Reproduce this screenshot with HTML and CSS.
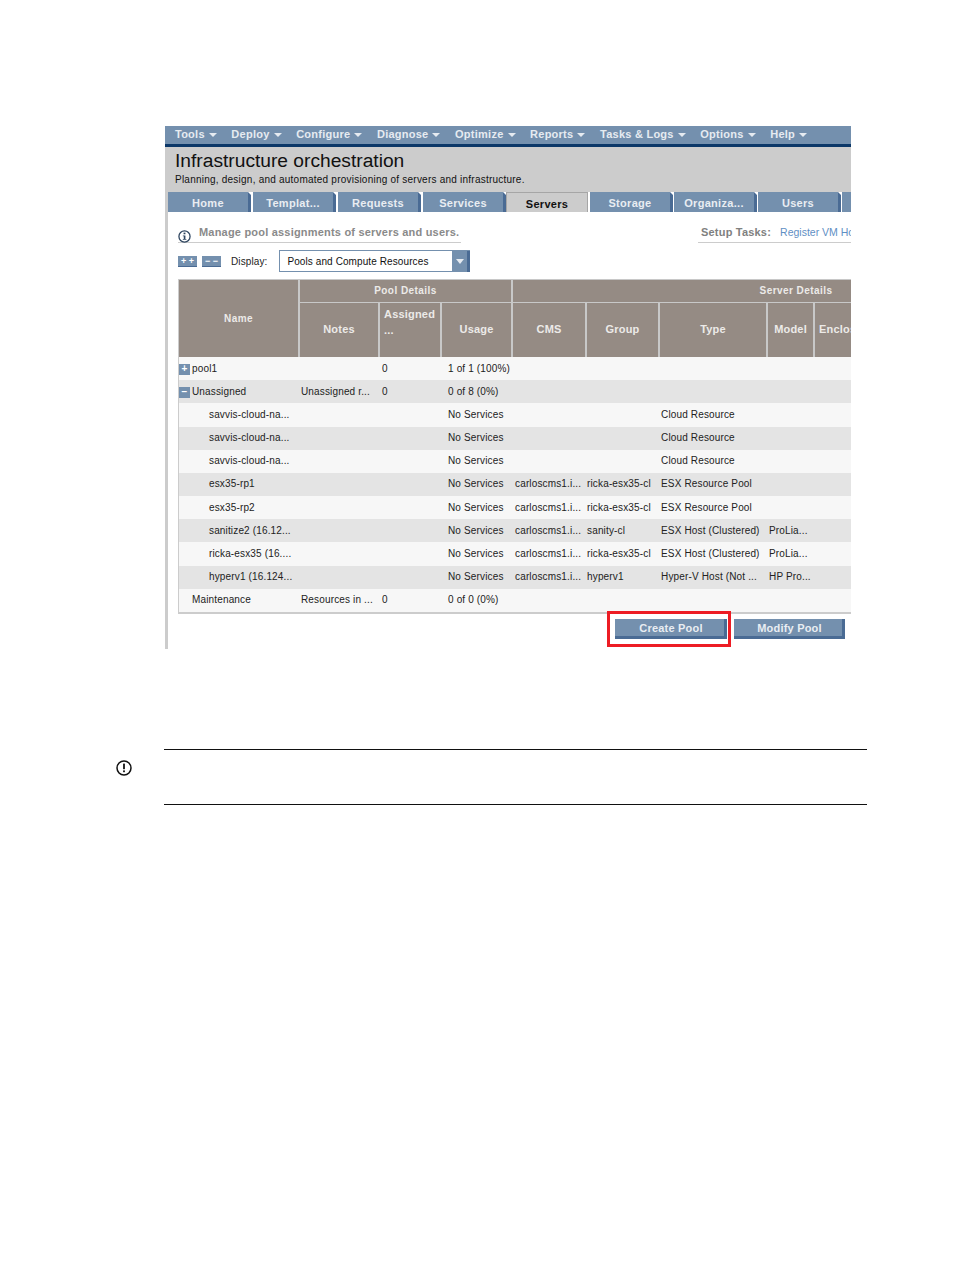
FILE: index.html
```html
<!DOCTYPE html>
<html lang="en">
<head>
<meta charset="utf-8">
<title>Infrastructure orchestration</title>
<link rel="stylesheet" href="styles.css">
</head>
<body>
<main class="page">
  <section class="shot">
    <nav class="menubar">
      <span class="menu-item">Tools<i class="caret"></i></span>
      <span class="menu-item">Deploy<i class="caret"></i></span>
      <span class="menu-item">Configure<i class="caret"></i></span>
      <span class="menu-item">Diagnose<i class="caret"></i></span>
      <span class="menu-item">Optimize<i class="caret"></i></span>
      <span class="menu-item">Reports<i class="caret"></i></span>
      <span class="menu-item">Tasks &amp; Logs<i class="caret"></i></span>
      <span class="menu-item">Options<i class="caret"></i></span>
      <span class="menu-item">Help<i class="caret"></i></span>
    </nav>
    <div class="body-frame">
      <header class="title-block">
        <h1 class="title">Infrastructure orchestration</h1>
        <p class="subtitle">Planning, design, and automated provisioning of servers and infrastructure.</p>
      </header>
      <div class="tabs">
        <span class="tab">Home</span>
        <span class="tab">Templat...</span>
        <span class="tab">Requests</span>
        <span class="tab">Services</span>
        <span class="tab tab-active">Servers</span>
        <span class="tab">Storage</span>
        <span class="tab">Organiza...</span>
        <span class="tab">Users</span>
        <span class="tab tab-stub"></span>
      </div>
      <div class="content">
        <div class="info-row">
          <div class="manage">
            <svg class="info-icon" viewBox="0 0 14 14" width="13" height="13" aria-hidden="true"><circle cx="7" cy="7" r="6" fill="#fff" stroke="#2f4660" stroke-width="1.4"/><rect x="6" y="2.8" width="2" height="1.8" fill="#2f4660"/><path d="M5.2 5.8H8v3.8h1v1H5.2v-1h1V6.8h-1z" fill="#2f4660"/></svg>
            <span class="manage-text">Manage pool assignments of servers and users.</span>
          </div>
          <div class="setup">
            <span class="setup-label">Setup Tasks:</span>
            <span class="setup-link">Register VM Hosts</span>
          </div>
        </div>
        <div class="display-row">
          <span class="mini-btn">+ +</span>
          <span class="mini-btn">&minus; &minus;</span>
          <span class="display-label">Display:</span>
          <div class="select">
            <span class="select-value">Pools and Compute Resources</span>
            <span class="select-btn"><i class="select-caret"></i></span>
          </div>
        </div>
        <table class="grid">
          <colgroup>
            <col class="c-name"><col class="c-notes"><col class="c-assigned"><col class="c-usage"><col class="c-cms"><col class="c-group"><col class="c-type"><col class="c-model"><col class="c-encl"><col class="c-rest">
          </colgroup>
          <thead>
            <tr class="head-top">
              <th rowspan="2" class="th-small">Name</th>
              <th colspan="3" class="th-small">Pool Details</th>
              <th colspan="6" class="th-small">Server Details</th>
            </tr>
            <tr class="head-sub">
              <th>Notes</th><th class="th-wrap">Assigned ...</th><th>Usage</th><th>CMS</th><th>Group</th><th>Type</th><th>Model</th><th class="th-left">Enclosure</th><th></th>
            </tr>
          </thead>
          <tbody>
            <tr class="odd"><td class="parent"><i class="tree-btn">+</i>pool1</td><td></td><td>0</td><td>1 of 1 (100%)</td><td></td><td></td><td></td><td></td><td colspan="2"></td></tr>
            <tr class="even"><td class="parent"><i class="tree-btn">&minus;</i>Unassigned</td><td>Unassigned r...</td><td>0</td><td>0 of 8 (0%)</td><td></td><td></td><td></td><td></td><td colspan="2"></td></tr>
            <tr class="odd tall nudge"><td class="child">savvis-cloud-na...</td><td></td><td></td><td>No Services</td><td></td><td></td><td>Cloud Resource</td><td></td><td colspan="2"></td></tr>
            <tr class="even nudge"><td class="child">savvis-cloud-na...</td><td></td><td></td><td>No Services</td><td></td><td></td><td>Cloud Resource</td><td></td><td colspan="2"></td></tr>
            <tr class="odd nudge"><td class="child">savvis-cloud-na...</td><td></td><td></td><td>No Services</td><td></td><td></td><td>Cloud Resource</td><td></td><td colspan="2"></td></tr>
            <tr class="even nudge"><td class="child">esx35-rp1</td><td></td><td></td><td>No Services</td><td>carloscms1.i...</td><td>ricka-esx35-cl</td><td>ESX Resource Pool</td><td></td><td colspan="2"></td></tr>
            <tr class="odd"><td class="child">esx35-rp2</td><td></td><td></td><td>No Services</td><td>carloscms1.i...</td><td>ricka-esx35-cl</td><td>ESX Resource Pool</td><td></td><td colspan="2"></td></tr>
            <tr class="even"><td class="child">sanitize2 (16.12...</td><td></td><td></td><td>No Services</td><td>carloscms1.i...</td><td>sanity-cl</td><td>ESX Host (Clustered)</td><td>ProLia...</td><td colspan="2"></td></tr>
            <tr class="odd tall nudge"><td class="child">ricka-esx35 (16....</td><td></td><td></td><td>No Services</td><td>carloscms1.i...</td><td>ricka-esx35-cl</td><td>ESX Host (Clustered)</td><td>ProLia...</td><td colspan="2"></td></tr>
            <tr class="even nudge"><td class="child">hyperv1 (16.124...</td><td></td><td></td><td>No Services</td><td>carloscms1.i...</td><td>hyperv1</td><td>Hyper-V Host (Not ...</td><td>HP Pro...</td><td colspan="2"></td></tr>
            <tr class="odd nudge"><td class="parent plain">Maintenance</td><td>Resources in ...</td><td>0</td><td>0 of 0 (0%)</td><td></td><td></td><td></td><td></td><td colspan="2"></td></tr>
          </tbody>
        </table>
        <div class="actions">
          <div class="highlight"><span class="action-btn">Create Pool</span></div>
          <span class="action-btn">Modify Pool</span>
        </div>
      </div>
    </div>
  </section>
  <aside class="note">
    <svg class="note-icon" viewBox="0 0 16 16" width="16" height="16" aria-hidden="true"><circle cx="8" cy="8" r="7" fill="none" stroke="#111" stroke-width="1.5"/><rect x="7.1" y="3.6" width="1.8" height="5.6" fill="#111"/><rect x="7.1" y="10.4" width="1.8" height="1.8" fill="#111"/></svg>
    <div class="note-body"></div>
  </aside>
</main>
</body>
</html>
```
FILE: styles.css
```css
* { box-sizing: border-box; }
html, body { margin: 0; background: #fff; }
body { font-family: "Liberation Sans", Arial, sans-serif; color: #111; }
.page { padding: 126px 0 0 116px; height: 1270px; }

.shot { width: 686px; height: 523px; margin-left: 49px; overflow: hidden; }

.menubar { height: 21px; background: #7490ae; border-bottom: 3px solid #0b3768; display: flex; gap: 14.6px; padding-left: 10px; align-items: center; }
.menu-item { font-size: 11px; font-weight: 700; letter-spacing: .25px; color: #e6ebf1; display: flex; align-items: center; gap: 4px; white-space: nowrap; padding-bottom: 3px; }
.caret { width: 0; height: 0; margin-top: 2px; border: 4px solid transparent; border-top: 4px solid #e6ebf1; border-bottom: 0; }

.body-frame { border-left: 3px solid #ccc; height: 502px; }

.title-block { background: #ccc; height: 45px; padding: 2px 0 0 7px; }
.title { margin: 0; font-size: 19.2px; line-height: 24px; font-weight: 400; color: #111; white-space: nowrap; }
.subtitle { margin: 0; font-size: 10px; line-height: 13px; letter-spacing: .23px; color: #111; white-space: nowrap; }

.tabs { display: flex; background: #fff; height: 20px; }
.tab { position: relative; width: 83px; margin-right: 2px; flex: none; background: #7490ae; border-right: 3px solid #4a6b94; color: #e9edf2; font-size: 11px; font-weight: 700; text-align: center; line-height: 22px; letter-spacing: .3px; }
.tab::after { content: ""; position: absolute; top: 0; right: -3px; border-left: 3px solid transparent; border-top: 3px solid #fff; }
.tab-active { width: 82px; margin-left: -2px; margin-right: 2px; background: #ccc; border: 1px solid #a6a6a6; border-bottom: 0; color: #111; line-height: 22px; }
.tab-active::after { display: none; }
.tab-active ~ .tab { margin-right: 1px; }
.tab-stub { width: 20px; }

.content { padding: 0 0 0 10px; }

.info-row { display: flex; justify-content: space-between; height: 31px; padding-top: 12px; }
.manage { width: 283px; border-bottom: 1px solid #ccc; display: flex; align-items: flex-start; gap: 8px; }
.info-icon { flex: none; margin-top: 6px; }
.manage-text { font-size: 11px; font-weight: 700; color: #8a8a8a; letter-spacing: .2px; margin-top: 2px; white-space: nowrap; }
.setup { width: 153px; border-bottom: 1px solid #ccc; padding-left: 3px; white-space: nowrap; overflow: hidden; display: flex; gap: 9px; }
.setup-label { font-size: 11px; font-weight: 700; color: #808080; letter-spacing: .2px; margin-top: 2px; }
.setup-link { font-size: 10.5px; color: #5f8fc4; margin-top: 2px; }

.display-row { display: flex; align-items: center; height: 30px; margin-top: 3px; margin-bottom: 3px; }
.mini-btn { width: 19px; height: 11px; background: #7490ae; border-bottom: 1px solid #4a6b94; color: #fff; font-size: 9px; line-height: 10px; text-align: center; font-weight: 700; margin-right: 5px; white-space: nowrap; }
.display-label { font-size: 10px; color: #222; letter-spacing: .1px; margin: 0 12px 0 5px; }
.select { width: 191px; height: 22px; border: 1px solid #7490ae; border-right: 0; display: flex; background: #fff; }
.select-value { flex: 1; font-size: 10px; letter-spacing: .1px; color: #111; padding-left: 7px; line-height: 21px; white-space: nowrap; }
.select-btn { width: 18px; height: 21px; background: #7490ae; border-right: 3px solid #4a6b94; display: flex; align-items: center; justify-content: center; }
.select-caret { width: 0; height: 0; border: 4px solid transparent; border-top: 5px solid #e6ebf1; border-bottom: 0; }

.grid { border-collapse: separate; border-spacing: 0; table-layout: fixed; width: 888px; border-left: 1px solid #ccc; border-bottom: 2px solid #ccc; }
.c-name { width: 119px; } .c-notes { width: 80px; } .c-assigned { width: 62px; } .c-usage { width: 71px; } .c-cms { width: 74px; } .c-group { width: 73px; } .c-type { width: 108px; } .c-model { width: 47px; } .c-encl { width: 66px; } .c-rest { width: 200px; }

.grid th { background: #958b84; color: #eceae8; font-size: 11px; font-weight: 700; padding: 0 2px; border-left: 2px solid #c8c8c8; overflow: hidden; letter-spacing: .2px; line-height: 15px; }
.head-top th:first-child { border-left: 0; }
.head-top th { border-top: 1px solid #c8c8c8; }
.head-top { height: 23px; }
.head-sub { height: 55px; }
.head-sub th { border-top: 1px solid #c8c8c8; padding-bottom: 2px; }
.grid .th-small { font-size: 10px; letter-spacing: .45px; padding-bottom: 1px; }
.grid .th-left { text-align: left; white-space: nowrap; padding-left: 4px; }
.grid .th-wrap { text-align: left; padding: 3px 0 0 4px; vertical-align: top; line-height: 16px; }

.grid tbody tr { height: 23px; }
.grid tbody tr.tall { height: 24px; }
.odd { background: #f7f7f7; }
.even { background: #e4e4e4; }
.grid td { font-size: 10px; letter-spacing: .15px; color: #222; padding: 0 0 0 3px; white-space: nowrap; overflow: hidden; }
.grid td:nth-child(3) { padding-left: 4px; }
.grid td:nth-child(4) { padding-left: 8px; }
.grid td:nth-child(5) { padding-left: 4px; }
.grid td:nth-child(6) { padding-left: 2px; }
.grid td.parent { padding-left: 0; }
.grid td.child { padding-left: 30px; }
.grid td.plain { padding-left: 13px; }
.grid .nudge td { padding-bottom: 2px; }
.tree-btn { display: inline-block; width: 11px; height: 11px; margin: -3px 2px -3px 0; background: #7490ae; color: #fff; font-style: normal; font-weight: 700; font-size: 10px; line-height: 10px; text-align: center; vertical-align: 0; }

.actions { display: flex; justify-content: flex-end; align-items: flex-start; padding-right: 6px; gap: 3px; margin-top: -3px; }
.highlight { border: 3px solid #ed1c24; padding: 5px 1px 7px 5px; width: 124px; height: 36px; }
.action-btn { display: block; width: 112px; height: 20px; padding: 1px 0 0 3px; background: #7490ae; border-right: 3px solid #4a6b94; border-bottom: 3px solid #4a6b94; color: #e9edf2; font-size: 11px; font-weight: 700; text-align: center; line-height: 17px; letter-spacing: .2px; white-space: nowrap; }
.actions > .action-btn { margin-top: 8px; width: 111px; }

.note { display: flex; gap: 32px; margin-top: 100px; align-items: flex-start; }
.note-icon { flex: none; margin-top: 11px; }
.note-body { width: 703px; height: 56px; border-top: 1px solid #111; border-bottom: 1px solid #111; }
```
